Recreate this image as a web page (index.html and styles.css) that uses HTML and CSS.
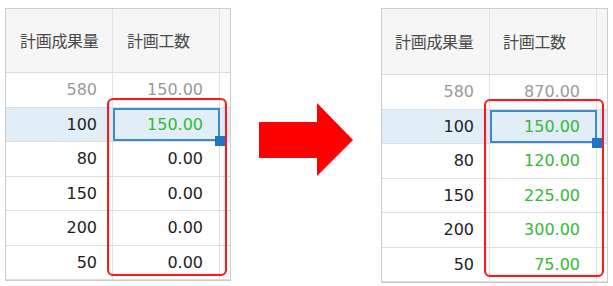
FILE: index.html
```html
<!DOCTYPE html>
<html lang="ja">
<head>
<meta charset="utf-8">
<title>計画工数</title>
<link rel="stylesheet" href="styles.css">
</head>
<body>
<div class="stage">
  <div class="panel panel--before">
    <div class="row head">
      <div class="cell">計画成果量</div>
      <div class="cell">計画工数</div>
      <div class="cell"></div>
    </div>
    <div class="row total">
      <div class="cell">580</div>
      <div class="cell">150.00</div>
      <div class="cell"></div>
    </div>
    <div class="row selected">
      <div class="cell">100</div>
      <div class="cell active green">150.00<span class="handle"></span></div>
      <div class="cell"></div>
    </div>
    <div class="row">
      <div class="cell">80</div>
      <div class="cell">0.00</div>
      <div class="cell"></div>
    </div>
    <div class="row">
      <div class="cell">150</div>
      <div class="cell">0.00</div>
      <div class="cell"></div>
    </div>
    <div class="row">
      <div class="cell">200</div>
      <div class="cell">0.00</div>
      <div class="cell"></div>
    </div>
    <div class="row">
      <div class="cell">50</div>
      <div class="cell">0.00</div>
      <div class="cell"></div>
    </div>
    <div class="mark"></div>
  </div>

  <div class="arrow">
    <svg width="94" height="73" viewBox="0 0 94 73" aria-hidden="true">
      <polygon points="0,19 58,19 58,0 94,37 58,73 58,55 0,55" fill="#ff0000"/>
    </svg>
  </div>

  <div class="panel panel--after">
    <div class="row head">
      <div class="cell">計画成果量</div>
      <div class="cell">計画工数</div>
      <div class="cell"></div>
    </div>
    <div class="row total">
      <div class="cell">580</div>
      <div class="cell">870.00</div>
      <div class="cell"></div>
    </div>
    <div class="row selected">
      <div class="cell">100</div>
      <div class="cell active green">150.00<span class="handle"></span></div>
      <div class="cell"></div>
    </div>
    <div class="row">
      <div class="cell">80</div>
      <div class="cell green">120.00</div>
      <div class="cell"></div>
    </div>
    <div class="row">
      <div class="cell">150</div>
      <div class="cell green">225.00</div>
      <div class="cell"></div>
    </div>
    <div class="row">
      <div class="cell">200</div>
      <div class="cell green">300.00</div>
      <div class="cell"></div>
    </div>
    <div class="row">
      <div class="cell">50</div>
      <div class="cell green">75.00</div>
      <div class="cell"></div>
    </div>
    <div class="mark"></div>
  </div>
</div>
</body>
</html>
```

FILE: styles.css
```css
* { box-sizing: border-box; }

html, body {
  margin: 0;
  background: #ffffff;
}

body {
  font-family: "DejaVu Sans", "Noto Sans CJK JP", sans-serif;
  color: #1e1e1e;
  font-size: 16px;
}

.stage {
  display: flex;
  align-items: flex-start;
  padding: 8px 0 0 5px;
}

.panel {
  position: relative;
  border: 1px solid #cdcdcd;
  background: #ffffff;
}

.row {
  display: grid;
  grid-template-columns: 107px 107px 10px;
  height: 34.5px;
  border-bottom: 1px solid #dedede;
}

.row:last-of-type {
  border-bottom: none;
}

.cell {
  position: relative;
  display: flex;
  align-items: center;
  justify-content: flex-end;
  padding-right: 15px;
  border-right: 1px solid #e2e2e2;
  white-space: nowrap;
}

.cell:nth-child(2) {
  padding-right: 16px;
}

.cell:last-child {
  border-right: none;
  padding: 0;
}

.head {
  height: 64px;
  background: #f6f6f6;
  border-bottom: 1px solid #dcdcdc;
}

.head .cell {
  justify-content: flex-start;
  padding: 0 0 2px 14px;
  font-family: "Noto Sans CJK JP", sans-serif;
  font-size: 16px;
  color: #4a4a4a;
  letter-spacing: -0.3px;
}

.total .cell {
  color: #9a9a9a;
}

.selected {
  background: #e1eef8;
}

.green {
  color: #35b835;
}

.active::after {
  content: "";
  position: absolute;
  inset: 0 -1px 0 0;
  border: 2px solid #3d8ad0;
}

.handle {
  position: absolute;
  right: -6px;
  bottom: -5px;
  width: 10px;
  height: 10px;
  background: #1f74c4;
  z-index: 2;
}

.mark {
  position: absolute;
  left: 101px;
  top: 89px;
  width: 120px;
  height: 178px;
  border: 2px solid #f51c1c;
  border-radius: 6px;
  box-shadow: inset 0 0 3px rgba(0, 0, 0, 0.18);
  pointer-events: none;
}

.arrow {
  width: 150px;
  padding: 95px 0 0 28px;
  line-height: 0;
}

.panel--after .row {
  grid-template-columns: 108px 107px 10px;
}

.panel--after .head {
  height: 66px;
}

.panel--after .head .cell {
  padding-left: 13px;
}

.panel--after .mark {
  left: 102px;
  top: 90px;
}
```
